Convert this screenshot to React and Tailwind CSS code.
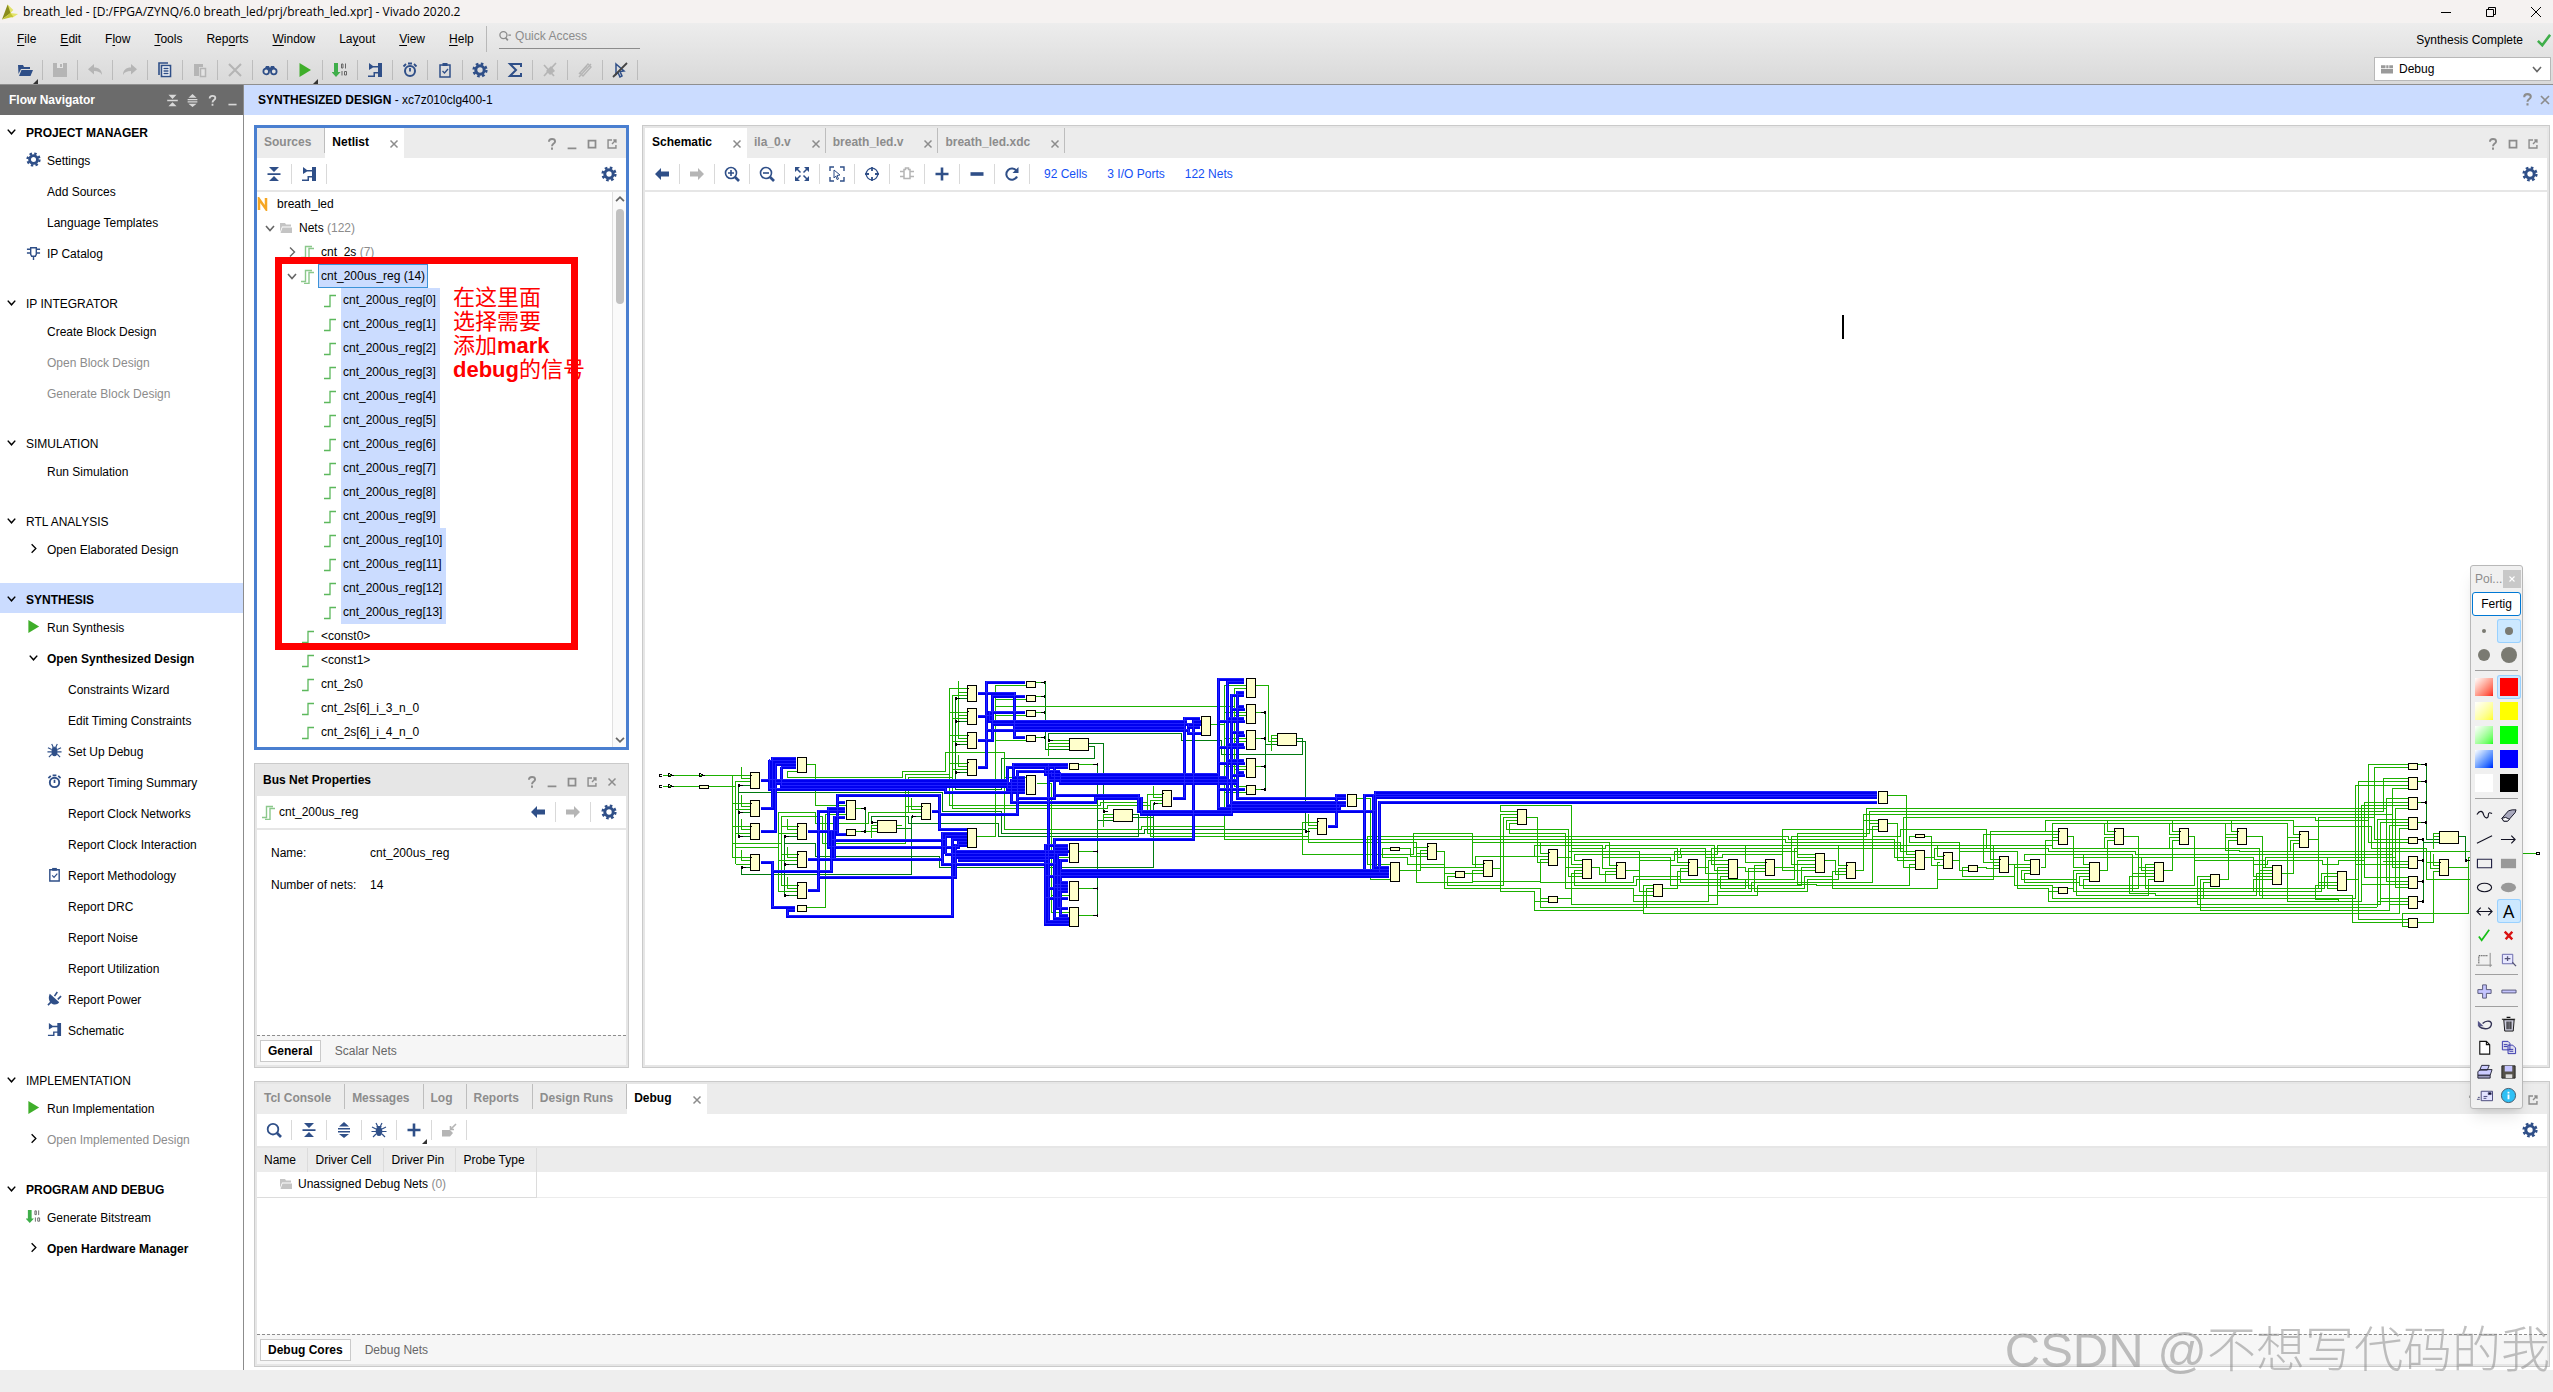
import { Fragment } from 'react';
import clsx from 'clsx';

// 16x16 toolbar glyphs, drawn with currentColor
const GLYPHS = {
  open: <><path d="M1 3h5l1 2h6v2H4L1.500 12z" fill="currentColor" /><path d="M4.500 8H16l-2.500 6H2z" fill="currentColor" /></>,
  save: <><path d="M1 1h14v14H1z" fill="currentColor" /><path d="M5 1h6v5H5z" fill="#e3e3e3" /><path d="M8 2h2v3H8z" fill="currentColor" /></>,
  undo: <path d="M7 2v3.500c5 0 8 2.500 8 7.500-1.500-3-4-4-8-4v3.500L1 7.200z" fill="currentColor" />,
  redo: <path d="M9 2v3.500c-5 0-8 2.500-8 7.500 1.500-3 4-4 8-4v3.500l6-5.300z" fill="currentColor" />,
  copy: <><path d="M2 13V1h9" fill="none" stroke="currentColor" strokeWidth="1.600" /><path d="M4.500 3.500h9v11h-9z" fill="#fff" stroke="currentColor" strokeWidth="1.600" /><path d="M6.500 6.500h5M6.500 9h5M6.500 11.500h5" stroke="currentColor" strokeWidth="1.300" /></>,
  paste: <><path d="M2 2h9v3H7v9H2z" fill="currentColor" /><path d="M8.500 6.500h5v8h-5z" fill="#e3e3e3" stroke="currentColor" strokeWidth="1.500" /></>,
  cross: <path d="M2 2l12 12M14 2L2 14" fill="none" stroke="currentColor" strokeWidth="2" />,
  binoculars: <><path d="M4 4h3l1 2 1-2h3l2.500 5H1.500z" fill="currentColor" /><circle cx="4.200" cy="9.500" r="2.800" fill="#e3e3e3" stroke="currentColor" strokeWidth="1.800" /><circle cx="11.800" cy="9.500" r="2.800" fill="#e3e3e3" stroke="currentColor" strokeWidth="1.800" /></>,
  play: <path d="M2.500 1v14L14 8z" fill="#3fae2a" />,
  bitstream: <><path d="M2 1h4v9h2.500L4 15-.5 10H2z" fill="#3fae4a" /><path d="M9.500 2h1.500v4H9.500zM13.500 1.500v5M10 9v4.500M12.500 9.500h2v3.500h-2z" fill="none" stroke="#666" /></>,
  schematic: <path d="M2 1l4 3h5V1h4v14h-4v-3.500H8V15H1v-1.500h5.500V10H11V5.500H6L2 8z" fill="currentColor" />,
  clock: <><circle cx="8" cy="9" r="5" fill="none" stroke="currentColor" strokeWidth="2" /><path d="M8 6v3.500M6 1.500h4M1.500 4.500l2.500-2.500M14.500 4.500L12 2" stroke="currentColor" strokeWidth="1.800" /></>,
  clipboard: <><path d="M3 3h10v12H3z" fill="none" stroke="currentColor" strokeWidth="1.500" /><path d="M5.500 1h5v3h-5z" fill="currentColor" /><path d="M5.500 9l2 2 3.500-4" fill="none" stroke="currentColor" strokeWidth="1.300" /></>,
  gear: <><circle cx="8" cy="8" r="4.200" fill="none" stroke="currentColor" strokeWidth="3" /><circle cx="8" cy="8" r="6.400" fill="none" stroke="currentColor" strokeWidth="2.400" strokeDasharray="2.600 2.430" /></>,
  sigma: <path d="M14 5V2H3l6 6-6 6h11v-3" fill="none" stroke="currentColor" strokeWidth="2" />,
  bugOff: <><path d="M4 9l5-5 4 5-5 4z" fill="currentColor" /><path d="M2 14L14 1M2 3l10 11" stroke="currentColor" strokeWidth="1.700" /></>,
  clipOff: <path d="M2 12L11 2l3 3-8 9-3-3 7-7M2 15L14 2" fill="none" stroke="currentColor" strokeWidth="1.400" />,
  selectOff: <><path d="M4 2l8 7-4 .5 2 4.500-2 1-2-4.500-2 2z" fill="none" stroke="currentColor" strokeWidth="1.500" /><path d="M1 15L15 1" stroke="#444" strokeWidth="1.800" /></>,
  collapse: <path d="M3 1h10L8 6zM1.500 7.200h13v1.800h-13zM3 15h10L8 10z" fill="currentColor" />,
  expand: <path d="M8 0l5 4.500H3zM2 6h12v1.600H2zM2 9h12v1.600H2zM3 12h10l-5 4z" fill="currentColor" />,
  chip: <><path d="M5 3h6v7l-1 2H6l-1-2z" fill="none" stroke="currentColor" strokeWidth="1.500" /><path d="M1 4.500h4M1 8.500h4M11 4.500h4M11 8.500h4M8 12v4" stroke="currentColor" strokeWidth="1.500" /></>,
  block: <path d="M5 3.500h1.500V2h3v1.500H11v9H5zM1 5.500h4M1 10.500h4M11 5.500h4M11 10.500h4" fill="none" stroke="currentColor" strokeWidth="1.500" />,
  bug: <><ellipse cx="8" cy="9.300" rx="3.300" ry="4.700" fill="currentColor" /><path d="M5.500 4.500h5M5 1l1.500 3M11 1L9.500 4M1 5l4 2M15 5l-4 2M.5 9.500H5M15.500 9.500H11M2 15l3-3M14 15l-3-3" fill="none" stroke="currentColor" strokeWidth="1.200" /></>,
  plug: <><path d="M3 3l10 9c-2 3-6 3-8.500 1S1 7 3 3z" fill="currentColor" /><path d="M8 5.500l3-4.500M11.500 9L15 5.500M5 11l-4 4" stroke="currentColor" strokeWidth="1.700" /></>,
  left: <path d="M7 2v3.500h8v5H7V14L1 8z" fill="currentColor" />,
  right: <path d="M9 2v3.500H1v5h8V14l6-6z" fill="currentColor" />,
  search: <><circle cx="7" cy="7.200" r="5.300" fill="none" stroke="currentColor" strokeWidth="1.800" /><path d="M11 11l4 4" stroke="currentColor" strokeWidth="2.600" /></>,
  zoomIn: <><circle cx="7" cy="7" r="5.500" fill="none" stroke="currentColor" strokeWidth="1.600" /><path d="M11 11l4 4" stroke="currentColor" strokeWidth="2.600" /><path d="M4 7h6M7 4v6" stroke="currentColor" strokeWidth="1.600" /></>,
  zoomOut: <><circle cx="7" cy="7" r="5.500" fill="none" stroke="currentColor" strokeWidth="1.600" /><path d="M11 11l4 4" stroke="currentColor" strokeWidth="2.600" /><path d="M4 7h6" stroke="currentColor" strokeWidth="1.600" /></>,
  fit: <><path d="M1 1h5L1 6zM15 1h-5l5 5zM1 15h5l-5-5zM15 15h-5l5-5z" fill="currentColor" /><path d="M2 2l4.500 4.500M14 2L9.500 6.500M2 14l4.500-4.500M14 14L9.500 9.500" stroke="currentColor" strokeWidth="1.500" /></>,
  selectArea: <><path d="M1 5V1h4M11 1h4v4M15 11v4h-4M5 15H1v-4" fill="none" stroke="currentColor" strokeWidth="1.400" /><path d="M5 4l6 5-3 .5 1.500 3.500L8 13.500 6.800 10 5 12z" fill="none" stroke="currentColor" /></>,
  target: <><circle cx="8" cy="8" r="5.800" fill="none" stroke="currentColor" strokeWidth="1.300" /><path d="M8 1v4M8 11v4M1 8h4M11 8h4" stroke="currentColor" strokeWidth="1.800" /></>,
  plus: <path d="M8 1.500v13M1.500 8h13" stroke="currentColor" strokeWidth="2.600" />,
  minus: <path d="M1.500 8h13" stroke="currentColor" strokeWidth="3.600" />,
  reload: <><path d="M13 10.500A5.600 5.600 0 1 1 12.500 5" fill="none" stroke="currentColor" strokeWidth="2" /><path d="M14.500 1v6h-6z" fill="currentColor" /></>,
  tag: <><path d="M1 8h8l3 3-3 3.500H1z" fill="currentColor" /><path d="M15 2l-5 5M9.500 4v3.500H13" fill="none" stroke="currentColor" strokeWidth="1.600" /></>,
  folder: <><path d="M2 3h5l1 1.500h5V6.500H4L2 12z" fill="#c4c4c4" /><path d="M4.500 7.500H14V13H2.500z" fill="#c4c4c4" /></>,
  bus: <path d="M1 13.500h4.500v-11H12M4 15.500h5v-11h5" fill="none" stroke="#8bc88b" strokeWidth="1.400" />,
  net: <path d="M2 14.500h6v-11h6" fill="none" stroke="#5cb85c" strokeWidth="1.300" />,
  help: <path d="M4.500 5.500c0-4.500 7-4 7-.500 0 2.500-3.500 2.500-3.500 5.500M8 12v2.500" fill="none" stroke="currentColor" strokeWidth="2.200" />,
  minimize: <path d="M3 13h10" stroke="currentColor" strokeWidth="2" />,
  maximize: <path d="M4 4h8v8H4z" fill="none" stroke="currentColor" strokeWidth="2" />,
  float: <path d="M8 3.500H3.500v9h9V9M8 8l4.500-4.500M9.500 3.500h3v3" fill="none" stroke="currentColor" strokeWidth="1.600" />,
  close: <path d="M4 4l8 8M12 4l-8 8" stroke="currentColor" strokeWidth="1.700" />,
  down: <path d="M4 6l4 4.500L12 6" fill="none" stroke="currentColor" strokeWidth="1.600" />,
  next: <path d="M6 3.500l4.500 4.500L6 12.500" fill="none" stroke="currentColor" strokeWidth="1.400" />,
  up: <path d="M3.500 10.500L8 6l4.500 4.500" fill="none" stroke="currentColor" strokeWidth="2" />,
  layout: <path d="M0 3h6v4H0zM7 3h3v4H7zM11 3h5v4h-5zM0 8h16v6H0z" fill="#9a9a9a" />,
  check: <path d="M1 9l5 5 9-12" fill="none" stroke="#3fae4a" strokeWidth="3" />,
};

function Icon({ name, size = 16, className }) {
  return (
    <svg viewBox="0 0 16 16" width={size} height={size} className={clsx('shrink-0', className)} aria-hidden="true">
      {GLYPHS[name]}
    </svg>
  );
}

function ToolButton({ icon, muted, menu, line = true }) {
  return (
    <button
      aria-label={icon}
      className={clsx(
        'relative flex h-5 w-[35px] items-center justify-center',
        line && 'border-r border-black/15',
        muted ? 'text-[#b5b5b5]' : 'text-[#2f4f88]',
      )}
    >
      <Icon name={icon} />
      {menu && (
        <svg viewBox="0 0 5 5" width="5" height="5" className="absolute right-1 -bottom-1">
          <path d="M5 0v5H0z" fill="#333" />
        </svg>
      )}
    </button>
  );
}

function WindowIcons({ icons }) {
  return (
    <div className="ml-auto flex items-center pt-[2px] pr-1 text-[#8c8c8c]">
      {icons.map((icon) => (
        <button key={icon} aria-label={icon} className="flex w-5 justify-center">
          <Icon name={icon} size={14} />
        </button>
      ))}
    </div>
  );
}

function Tabs({ tabs, icons }) {
  return (
    <div className="flex h-[30px] shrink-0 items-stretch bg-[#ececec]">
      {tabs.map(({ label, active, closable, line }) => (
        <div
          key={label}
          className={clsx('relative flex items-center pl-[7px]', active ? 'bg-white text-black' : 'text-[#8c8c8c]', closable ? 'pr-[3px]' : 'pr-[14px]')}
        >
          <button className="pb-[2px] font-bold">{label}</button>
          {closable && (
            <button aria-label={`Close ${label}`} className="pt-[2px] pl-[18px] text-[#8c8c8c]">
              <Icon name="close" size={14} />
            </button>
          )}
          {line && <span className="absolute top-0 right-0 h-[25px] w-px bg-[#bdbdbd]" />}
        </div>
      ))}
      <WindowIcons icons={icons} />
    </div>
  );
}

function Panel({ focused, className, children }) {
  return (
    <section
      className={clsx(
        'flex min-h-0 flex-col',
        focused ? 'border-[3px] border-[#4a7fd0] bg-white' : 'border border-[#cacaca] bg-[#e6e6e6] p-[2px]',
        className,
      )}
    >
      {children}
    </section>
  );
}

const toolbarRow = 'flex h-[34px] shrink-0 items-center border-b-2 border-[#e6e6e6] bg-white';

function BottomTabs({ active, other }) {
  return (
    <div className="flex h-[30px] shrink-0 items-center gap-[14px] border-t border-dashed border-[#8c8c8c] bg-[#f6f6f6] pl-[3px]">
      <button className="h-[22px] border border-[#cacaca] bg-white px-[7px] font-bold">{active}</button>
      <button className="text-[#666]">{other}</button>
    </div>
  );
}

const MENU = [
  ['', 'F', 'ile'], ['', 'E', 'dit'], ['F', 'l', 'ow'], ['', 'T', 'ools'], ['Rep', 'o', 'rts'],
  ['', 'W', 'indow'], ['La', 'y', 'out'], ['', 'V', 'iew'], ['', 'H', 'elp'],
];

const TOOLS = [
  { icon: 'open', menu: true }, { icon: 'save', muted: true }, { icon: 'undo', muted: true }, { icon: 'redo', muted: true },
  { icon: 'copy' }, { icon: 'paste', muted: true }, { icon: 'cross', muted: true }, { icon: 'binoculars' },
  { icon: 'play', menu: true }, { icon: 'bitstream' }, { icon: 'schematic' }, { icon: 'clock' }, { icon: 'clipboard' },
  { icon: 'gear' }, { icon: 'sigma' }, { icon: 'bugOff', muted: true }, { icon: 'clipOff', muted: true }, { icon: 'selectOff' },
];

function Header() {
  return (
    <header className="shrink-0">
      <div className="flex h-[23px] items-center bg-[#f5f2f1] pl-[2px]">
        <svg viewBox="0 0 18 18" width="17" height="18">
          <path d="M6 1l6 6-3 3 8 1-6 4-5-3z" fill="#e3e36a" />
          <path d="M6 1l3 9-9 7 3-8z" fill="#8a8c1c" />
          <path d="M0 17l9-7 3 4z" fill="#c3c532" />
        </svg>
        <h1 className="ml-1 font-['Open_Sans',sans-serif] text-[12px]/[18px]">breath_led - [D:/FPGA/ZYNQ/6.0 breath_led/prj/breath_led.xpr] - Vivado 2020.2</h1>
        <div className="ml-auto flex items-center gap-[35px] pr-3">
          <svg viewBox="0 0 10 10" width="10" height="10"><path d="M0 5.500h10" stroke="#000" /></svg>
          <svg viewBox="0 0 10 10" width="10" height="10" fill="none" stroke="#000"><path d="M.5 2.500h7v7h-7zM2.500 2.500v-2h7v7h-2" /></svg>
          <svg viewBox="0 0 10 10" width="10" height="10" stroke="#000"><path d="M0 0l10 10M10 0L0 10" /></svg>
        </div>
      </div>
      <div className="flex h-[62px] justify-between border-b border-[#8f8f8f] bg-linear-to-b from-[#ededed] to-[#d9d9d9]">
        <div>
          <div className="flex h-[31px] items-center pl-[5px]">
            {MENU.map(([before, key, after]) => (
              <button key={before + key + after} className="px-3">
                {before}<span className="underline underline-offset-2">{key}</span>{after}
              </button>
            ))}
            <label className="flex h-[26px] items-center border-l border-[#b8b8b8] pl-3">
              <span className="flex w-[141px] items-center gap-1 border-b border-[#8c8c8c] pb-1 text-[#8c8c8c]">
                <svg viewBox="0 0 14 14" width="14" height="14" fill="none" stroke="currentColor">
                  <circle cx="5" cy="6" r="4" strokeWidth="1.500" /><path d="M7.500 9l2.500 3" strokeWidth="2" /><path d="M10.500 6h3" strokeWidth="1.500" />
                </svg>
                <input className="w-full outline-none placeholder:text-[#8c8c8c]" placeholder="Quick Access" />
              </span>
            </label>
          </div>
          <div className="flex h-[31px] items-center pl-2">
            {TOOLS.map((tool) => <ToolButton key={tool.icon} {...tool} />)}
          </div>
        </div>
        <div className="flex flex-col items-end pr-[2px]">
          <div className="flex h-[34px] items-center gap-[14px]">
            <span>Synthesis Complete</span>
            <Icon name="check" size={14} />
          </div>
          <label className="relative flex h-[24px] w-[177px] items-center border border-[#b8b8b8] bg-white pl-[6px]">
            <Icon name="layout" size={12} />
            <select aria-label="Layout" className="h-full w-full appearance-none pl-[6px] outline-none" defaultValue="Debug">
              <option>Debug</option>
            </select>
            <Icon name="down" className="pointer-events-none absolute right-[5px] text-[#666]" />
          </label>
        </div>
      </div>
    </header>
  );
}

const FLOW = [
  { title: 'PROJECT MANAGER', bold: true, items: [{ label: 'Settings', icon: 'gear' }, { label: 'Add Sources' }, { label: 'Language Templates' }, { label: 'IP Catalog', icon: 'chip' }] },
  { title: 'IP INTEGRATOR', items: [{ label: 'Create Block Design' }, { label: 'Open Block Design', off: true }, { label: 'Generate Block Design', off: true }] },
  { title: 'SIMULATION', items: [{ label: 'Run Simulation' }] },
  { title: 'RTL ANALYSIS', items: [{ label: 'Open Elaborated Design', icon: 'next' }] },
  {
    title: 'SYNTHESIS', bold: true, current: true,
    items: [
      { label: 'Run Synthesis', icon: 'play' },
      { label: 'Open Synthesized Design', icon: 'down', bold: true },
      { label: 'Constraints Wizard', deep: true },
      { label: 'Edit Timing Constraints', deep: true },
      { label: 'Set Up Debug', icon: 'bug', deep: true },
      { label: 'Report Timing Summary', icon: 'clock', deep: true },
      { label: 'Report Clock Networks', deep: true },
      { label: 'Report Clock Interaction', deep: true },
      { label: 'Report Methodology', icon: 'clipboard', deep: true },
      { label: 'Report DRC', deep: true },
      { label: 'Report Noise', deep: true },
      { label: 'Report Utilization', deep: true },
      { label: 'Report Power', icon: 'plug', deep: true },
      { label: 'Schematic', icon: 'schematic', deep: true },
    ],
  },
  { title: 'IMPLEMENTATION', items: [{ label: 'Run Implementation', icon: 'play' }, { label: 'Open Implemented Design', icon: 'next', off: true }] },
  { title: 'PROGRAM AND DEBUG', bold: true, items: [{ label: 'Generate Bitstream', icon: 'bitstream' }, { label: 'Open Hardware Manager', icon: 'next', bold: true }] },
];

function FlowNavigator() {
  return (
    <nav className="flex w-[244px] shrink-0 flex-col border-r border-[#8c8c8c] bg-white">
      <div className="flex h-[30px] items-center bg-[#6b6b6b] pl-[9px] font-bold text-white">
        Flow Navigator
        <div className="ml-auto flex pr-px text-[#d8d8d8]">
          {['collapse', 'expand', 'help', 'minimize'].map((icon) => (
            <button key={icon} aria-label={icon} className="flex w-5 justify-center"><Icon name={icon} size={13} /></button>
          ))}
        </div>
      </div>
      <div className="flex flex-col gap-[17px] pt-px">
        {FLOW.map((group) => (
          <div key={group.title}>
            <button className={clsx('flex h-[30px] w-full items-center gap-[7px] pt-[3px] pl-1', group.bold && 'font-bold', group.current && 'bg-[#cbdcff]')}>
              <Icon name="down" size={15} className="-mt-[3px]" />
              {group.title}
            </button>
            {group.items.map((item) => (
              <button
                key={item.label}
                className={clsx('flex h-[31px] w-full items-center gap-[6px] pb-[2px]', item.deep ? 'pl-[46px]' : 'pl-[25px]', item.bold && 'font-bold', item.off && 'text-[#8c8c8c]')}
              >
                <span className={clsx('flex w-4 justify-center pb-[2px]', item.icon === 'next' || item.icon === 'down' ? 'text-black' : 'text-[#2f4f88]')}>
                  {item.icon && <Icon name={item.icon} size={15} />}
                </span>
                {item.label}
              </button>
            ))}
          </div>
        ))}
      </div>
    </nav>
  );
}

const REG_BITS = Array.from({ length: 14 }, (_, i) => `cnt_200us_reg[${i}]`);
const PLAIN_NETS = ['<const0>', '<const1>', 'cnt_2s0', 'cnt_2s[6]_i_3_n_0', 'cnt_2s[6]_i_4_n_0'];

function NetTree() {
  return (
    <div className="relative flex min-h-0 flex-1">
      <ul className="flex-1 leading-6">
        <li className="flex items-center gap-2">
          <svg viewBox="0 0 12 14" width="12" height="14"><path d="M2 13V2l7 10V1" fill="none" stroke="#f5a623" strokeWidth="2.500" /></svg>
          breath_led
        </li>
        <li className="flex items-center pl-[5px]">
          <Icon name="down" className="text-[#666]" /><Icon name="folder" className="mr-[5px]" />
          <span>Nets <span className="text-[#8c8c8c]">(122)</span></span>
        </li>
        <li className="flex items-center pl-[27px]">
          <Icon name="next" className="text-[#666]" /><Icon name="bus" className="mr-[5px]" />
          <span>cnt_2s <span className="text-[#8c8c8c]">(7)</span></span>
        </li>
        <li className="flex items-center pl-[27px]">
          <Icon name="down" className="text-[#666]" /><Icon name="bus" className="mr-[2px]" />
          <span className="h-6 border border-[#3c93d8] bg-[#cbdcff] px-[2px] leading-[22px]">cnt_200us_reg (14)</span>
        </li>
        {REG_BITS.map((net) => (
          <li key={net} className="flex items-center gap-[3px] pl-[65px]">
            <Icon name="net" /><span className="bg-[#cbdcff] pr-1 pl-[2px]">{net}</span>
          </li>
        ))}
        {PLAIN_NETS.map((net) => (
          <li key={net} className="flex items-center gap-[5px] pl-[43px]"><Icon name="net" />{net}</li>
        ))}
      </ul>
      <div className="flex w-[14px] flex-col items-center justify-between border-l border-[#e0e0e0] bg-[#fafafa] text-[#666]">
        <Icon name="up" size={14} />
        <div className="mt-[3px] mb-auto h-[95px] w-2 rounded-full bg-[#c1c1c1]" />
        <Icon name="up" size={14} className="rotate-180" />
      </div>
      {/* hand-drawn note over the tree */}
      <div className="absolute top-[65px] left-[18px] h-[393px] w-[303px] border-[7px] border-[#ff0000]" />
      <p className="absolute top-[94px] left-[196px] font-['Liberation_Sans','Noto_Sans_CJK_SC',sans-serif] text-[22px]/[24px] whitespace-nowrap text-[#ff0000]">
        在这里面<br />选择需要<br />添加<b>mark</b><br /><b>debug</b>的信号
      </p>
    </div>
  );
}

// Each sheet carries its own drawing grid; boxes are [x, y, w, h].
const SHEETS = [
  {
    at: 'translate(640 660) scale(.33333)',
    net: 'M70 346H330M70 379H287M278 346V592H330M287 613V364H330M287 613H330M304 321V355H330M278 430H330M304 405V439H330M287 448H330M278 499H330M304 478V508H330M287 520H330M304 570V601H330M278 550H424M287 562H415M415 694V457H526V490H685V457H843M424 676V469H547V550H796V343H928M424 499H471M442 478V508H471M415 520H471M424 583H471M442 561V592H471M415 601H471M424 676H471M442 651V685H471M415 694H471M501 313H526V436H618M471 334H442V352H787V334H916V277H1093V508H1200M805 457V352H937M501 742H556V463H618M796 439H843M814 414V448H843M928 436V85H981M937 445V106H981M955 63V235H981M955 97H981M928 436H1200M937 445H1200M928 157H981M955 166H981M937 175H981M928 226H981M937 244H981M928 310H981M955 285V319H981M937 328H981M1158 76H1066V529H1012M1066 118H1158M1066 139H1200M1066 166H1158M1066 241H1158M1190 370H1234M1093 352H1158M694 534V496H712M694 505H712M679 514H712M770 496H785M648 445H672M648 514H672M1188 67H1212M1188 109H1212M1188 157H1212M1188 232H1212',
    dark: 'M330 376H296V529H330M296 457H330M296 397H907V454H1084V520H1200M330 622H304V643H814V469H843M471 529H433V706H471M433 613H471M433 550H526V589H898V622H1200M676 445V514M712 487H694V469H805V490H1075V529H1200M770 505H814M981 115H946V388H1084V295H1200M946 184H981M946 253H981M946 337H981',
    bus: 'M363 361H1102V322H1216M363 445H399V295H468M363 514H406V313H468M389 301V388H916V397H1155M389 304H468M424 322V379H1155M424 322H468M406 370H1155M363 607H398V742H466M398 634H575V514M504 514H592M504 598H907V520H980M504 691H536V454H616M466 751H442V769H938V538H980M536 652H947V556H980M616 445H566V562H955V547H980M575 541H916M916 583V529H980M916 583H1200M616 472H584V598M616 427H592V406H898V508H980M592 406V523H618M876 454H898M898 463H1134V334H1200M907 598V613H1216M947 574H1200M938 592H1200M955 601H1200M1014 100H1124V232H1155M1014 169H1057V109H1155M1014 241H1057V169M1014 322H1040V67H1155M1155 157H1048V185H1200M1057 193H1200M1124 203H1200M1040 211H1200M1102 361V388H1155M1155 361H1114V427H1200M1134 415H1200M1155 352H1120V313H1200',
    cells: [[331, 337, 27, 48], [331, 421, 27, 48], [331, 490, 27, 48], [331, 583, 27, 48], [472, 292, 27, 45], [472, 490, 27, 48], [472, 574, 27, 48], [472, 667, 27, 48], [472, 736, 27, 18], [619, 421, 27, 57], [619, 508, 27, 18], [712, 481, 57, 36], [844, 430, 27, 48], [982, 76, 27, 48], [982, 145, 27, 48], [982, 217, 27, 48], [982, 298, 27, 48], [982, 505, 27, 57], [1159, 64, 27, 18], [1159, 106, 27, 18], [1159, 151, 27, 18], [1159, 226, 27, 18], [1159, 346, 27, 57], [178, 376, 27, 9]],
    left: [[297, 376], [297, 457], [297, 529], [306, 622], [435, 529], [435, 613], [435, 706], [948, 115], [948, 184], [948, 253], [948, 337], [696, 487], [817, 469]],
    right: [[675, 445], [675, 514], [1215, 67], [1215, 109], [1215, 157], [1215, 232]],
  },
  {
    at: 'translate(1040 660) scale(.33333)',
    net: 'M0 139H583M618 85H583V379H618M618 76H553V538H1080M553 157H618M553 235H618M553 319H618M583 166H618M583 244H618M583 328H618M553 397H618M513 193H553M648 76H685V244H712M694 272V226H712M694 235H712M25 288V250H88M25 259H88M25 241H88M118 313H160M118 574H160M118 685H160M118 766H160M648 157H665M648 235H665M648 319H665M648 388H665M0 436H181V427H322M0 445H202V436H331M367 403H322V520H787M367 421H331V529H805M340 378V412H367M343 430H367M190 500V463H220M190 472H220M0 508H304V499H553M0 370H34V757H88M34 592H88M34 706H88M832 487H787V583H1080M805 462V496H832M832 505H805V547H1080M1080 529H982V613H1051M951 415H991V658H1051M1051 565H1027V592H1080',
    dark: 'M16 67V268H88M0 295H163V259H148M88 241H25V220H424V241H544V283H787V235H771M771 244H796V514M676 157V388M676 253H712M172 313V766M172 481H220M148 250H190V454M280 463H295V529H0M280 472H340M340 430V622H0M0 520H313V508H796',
    bus: 'M0 185H440M0 193H445M0 203H434M0 211H445V221H484M400 415H434V175H480M445 193H484M484 184H460V538H43V775H88M612 58H535V445H900V436M612 67H562V436H918M612 106H575V463H304V415H166V427H0M612 97H592V415H918M592 140H612M575 148H616M562 175H612M535 184H616M575 217H612M592 227H616M562 253H612M535 262H616M562 301H612M535 310H616M592 338H612M575 346H616M535 388H616M0 313H85M0 322H85M25 313V784H88M43 322V415H0M16 322V343H535M34 340V352H562M25 361H592M61 340V370H592M0 334H61M43 406H295V454H1006V398H1080M575 427H918M864 499H889V406H918M973 631V406H1080M1000 406V631M1006 400V622H1048M1080 427H1018V640M1006 413H1080M61 631H1048M61 640H1048M16 649H1048M0 574H88M0 583H84M0 592H43M0 601H25M0 613H48M88 793H16V556H84M43 565H84M84 601H61V766H84M52 583V745H84M61 667H84M43 676H84M25 685H84M52 694H84M16 715H84M480 202H445V193',
    cells: [[88, 235, 57, 36], [88, 310, 27, 18], [88, 550, 27, 57], [88, 664, 27, 57], [88, 742, 27, 57], [220, 448, 57, 36], [367, 391, 27, 48], [484, 169, 27, 57], [619, 55, 27, 57], [619, 133, 27, 57], [619, 211, 27, 57], [619, 295, 27, 57], [619, 376, 27, 27], [712, 220, 57, 36], [832, 475, 27, 48], [922, 403, 27, 36], [1051, 562, 27, 9], [1051, 607, 27, 57]],
    left: [[27, 241], [192, 454], [343, 430], [798, 514]],
    right: [[172, 313], [172, 574], [172, 685], [172, 766], [675, 157], [675, 235], [675, 319], [675, 388]],
  },
  {
    at: 'translate(1400 740) scale(.35714 .33333)',
    net: 'M0 289H1087V298H1384V352H1443M0 298H1079V307H1401V334H1443M0 307H46V427H203V391H233M0 343H37V280H203V373H233M37 322H77M0 352H21V373H124M77 331H57V391H0M57 382H233M46 340H77M0 325H29V349H77M105 334H124V445H393V502H1512M124 400H155M155 409H133V436H289V232H329M182 400H233M203 307H586V376H606M211 382V349H415M203 424H393V358H415M393 427H653V409H785V385H807M260 385H281V223H329M281 385V454H376V511H681V520H1512M329 214H281V196H480V373H511M329 241H298V268H472V409H511M329 250H306V280H463V445H653V484H863V361H919M357 232H385V367H415M376 349V316H567V385H606M393 307V340H415M443 352H480M480 325H575V316H880V391H919M472 334H670V454H709M463 382H511M511 361H488V343H888V316H1512M511 400H480V493H888V382H919M511 391H488V436H662V418H1104V325H1409M538 382H558V403H606M575 427V394H606M586 325H777V367H807M567 352H757V436H993M757 376H807M634 391H670M670 361H768V334H872V373H919M415 475H393M415 484H376M443 475H480M736 445H777V394H807M709 436H681V511M709 445H690V502M709 466H653M785 409V427H975M777 352H788V343M785 343V325H855V400H919M835 382H863M855 352H903V343H1071M872 334V325H1096V373H1163M880 334H1113V352H1163M919 409H897V445H967V418M946 382H967V394H1023M967 316V367H1023M1023 385H975V445H1132V409H1211M1023 376H993V454H1141V418H1228V391M888 454H984V427H1323V259H1339M1051 382H1104M1163 391H1071V268H1298M1163 343H1113V280H1315V214H1512M1096 325V289H1307V205H1512M1163 361H1113V433H1166V436H1427V373H1443M1163 382H1124V436H1000V466H863M1190 361H1219V403H1250M1250 394H1211V445H1505V367H1512M1250 385H1228V409M1228 316V376H1250M1277 391H1298V223H1512M1298 241H1339M1315 214V250H1339M1307 205V268H1339M1366 166H1418V343H1443M1366 250H1393V361H1443M1323 289H1401V268H1512M1443 382H1409V232H1512M1443 289H1427V307H1512M1470 289H1488V376H1520M1470 352H1496M1520 358H1496V325H1512M1505 316V349H1520M1505 418H1512',
    dark: '',
    bus: 'M0 158H1337M0 166H1337M0 174H1337M0 187H1337',
    cells: [[77, 310, 26, 48], [155, 394, 26, 18], [233, 361, 26, 48], [329, 208, 26, 45], [415, 328, 26, 48], [415, 469, 26, 18], [511, 358, 26, 57], [606, 367, 26, 48], [709, 433, 26, 36], [807, 358, 26, 48], [919, 358, 26, 57], [1023, 358, 26, 48], [1163, 340, 26, 57], [1250, 367, 26, 48], [1339, 154, 26, 36], [1339, 238, 26, 36], [1443, 283, 26, 9], [1443, 331, 26, 57]],
    left: [],
    right: [],
  },
  {
    at: 'translate(1940 740) scale(.39093 .33333)',
    net: 'M0 205H1142V424H1198M0 214H1134V115H1198M0 223H1157V145H1198M1157 223V382H1198M0 232H960V241H1096V73H1198M968 445V232H1112V82H1198M905 241V259H1103V325H1245V418H1358M0 268H119V325M0 325H277V334H500V343H1157M0 307H50V391H72M0 316H288V250H889V484H1078V196H1198M137 316V418H0M303 274H129V358H152M303 283H111V367H152M270 274V241H905V283H919M288 292V325H817V466H1055V547H1198M288 292H303M258 382H270V301H303M328 289H341V382H383M429 241V274H446M421 250V283H446M421 325V292H446M446 301H429V391H407M471 289H508V445H366V418H383M595 241V274H612M587 250V283H612M587 325V292H612M612 301H595V391H573M638 289H651V436H533M746 241V274H761M730 250V331H766V334H1358M730 283H761M730 292H761M761 301H738V418H717M786 289H825V475M889 292H919M919 301H897V334M919 310H905V400H875M945 298H968M50 334H198V445H277V484H658V409H692M341 352H802V409H850M802 373H838V361H978V373H1019V361H1086V187H1198M832 382V352H1165V205H1198M651 361H835M231 361H217V343H492V454H809V427M177 373H190V436H288V475H1063V136H1198M34 361H50M72 382H57V409H190M97 382H119V385H152M152 376H137M190 373H231M190 382H231M231 391H208V418H349M231 400H217V427H357M383 400H349V466H533V418H548M383 409H357V436H651M383 391H341V454H492M383 373H366V343M328 445H341M303 442H288M303 454H277M516 352V391H548M548 373H525V445H802M508 382H548M492 400H548M548 409H485V460H552V466H809V400H850M658 484V493H1126V247H1198M692 418H666V511H1150V256H1198M692 427H675V475M825 382H850M817 391H850M850 418H802V454H975V400H1017M802 445H984V409H1017M1017 427H968M1017 436H960V478H1019V484M1017 445H991V352M1041 418H1070V538H1198M1070 418V124H1198M1086 361V412H1198M1078 433H1198M1063 373H1198M1119 502V238H1198M0 502H1119M1176 520V265H1198M0 520H1176M1142 205V175H1198M1119 484H1198M1126 475H1198M1150 493H1198M1165 352V442H1198M1134 364H1198M1096 241V307H1198M1112 232V298H1198M1358 352H1353V520H1183V559H1198M1222 547H1262V394H1277M1222 73H1235M1222 124H1235M1222 187H1235M1222 247H1235M1262 326V280H1277M1262 289H1277M1262 343V376H1277M1245 367H1277M1255 334V385H1277M1303 382H1353M1491 340H1526M0 349H8M0 376H8',
    dark: 'M1244 73V298H1277M1236 298V484M1236 307H1277M1328 289H1344V361',
    bus: '',
    cells: [[9, 337, 24, 48], [73, 376, 24, 18], [152, 349, 24, 48], [231, 358, 24, 45], [303, 265, 24, 48], [303, 442, 24, 18], [383, 367, 24, 57], [446, 265, 24, 48], [548, 367, 24, 57], [612, 265, 24, 48], [692, 403, 24, 36], [761, 265, 24, 48], [850, 376, 24, 57], [919, 274, 24, 48], [1017, 394, 24, 57], [1198, 70, 24, 18], [1198, 112, 24, 36], [1198, 172, 24, 36], [1198, 232, 24, 36], [1198, 292, 24, 18], [1198, 349, 24, 36], [1198, 409, 24, 36], [1198, 469, 24, 36], [1198, 535, 24, 27], [1277, 274, 50, 36], [1277, 358, 24, 48]],
    left: [[1346, 361]],
    right: [[1243, 73], [1243, 124], [1243, 187], [1243, 247], [1235, 298], [1235, 361], [1235, 424], [1235, 484]],
  },
];

function SchematicCanvas() {
  return (
    <svg viewBox="645 192 1902 873" className="block min-h-0 w-full flex-1 bg-white" fill="none" shapeRendering="crispEdges">
      {SHEETS.map((sheet) => (
        <g key={sheet.at} transform={sheet.at}>
          <path d={sheet.dark} stroke="#007a10" vectorEffect="non-scaling-stroke" />
          <path d={sheet.net} stroke="#1bb000" vectorEffect="non-scaling-stroke" />
          <path d={sheet.bus} stroke="#0000f0" strokeWidth="3" vectorEffect="non-scaling-stroke" />
          <g transform="translate(0 -3)">
            <path d={sheet.bus} stroke="#2020ff" vectorEffect="non-scaling-stroke" />
          </g>
          {sheet.cells.map(([x, y, w, h]) => (
            <Fragment key={`${x}-${y}`}>
              <rect x={x} y={y} width={w} height={h} fill="#ffffcc" stroke="#000" vectorEffect="non-scaling-stroke" />
              {h === 48 && <path d={`M${x} ${y + 9}h4`} stroke="#000" vectorEffect="non-scaling-stroke" />}
            </Fragment>
          ))}
          {sheet.left.map(([x, y]) => <path key={`${x}-${y}`} d={`M${x - 2} ${y - 4}h5v3h8v3h-8v3h-5z`} fill="#000" />)}
          {sheet.right.map(([x, y]) => <path key={`${x}-${y}`} d={`M${x + 3} ${y - 4}h-5v3h-10v3h10v3h5z`} fill="#000" />)}
        </g>
      ))}
      <path d="M662 774h-3v2h3M662 785h-3v2h3M668 773v4l5-1.500zM668 784v4l5-1.500zM699 773v4l5-1.500zM2536 852h3v2h-3z" stroke="#000" />
      <path d="M1843 315v24" stroke="#000" strokeWidth="2" />
    </svg>
  );
}

function DebugTable() {
  const cell = 'border-r border-[#dcdcdc] px-[7px] text-left font-normal';
  return (
    <div className="flex-1 bg-white">
      <div className="bg-[#ececec]">
        <table className="border-collapse">
          <thead className="h-6">
            <tr>
              <th className={clsx(cell, 'w-[51px]')}>Name</th>
              <th className={clsx(cell, 'w-[76px]')}>Driver Cell</th>
              <th className={clsx(cell, 'w-[72px]')}>Driver Pin</th>
              <th className={clsx(cell, 'w-[81px]')}>Probe Type</th>
            </tr>
          </thead>
          <tbody className="h-[25px] bg-white">
            <tr>
              <td colSpan={4} className="border-r border-b border-[#dcdcdc] pl-[21px]">
                <div className="flex items-center gap-1">
                  <Icon name="folder" />
                  <span>Unassigned Debug Nets <span className="text-[#8c8c8c]">(0)</span></span>
                </div>
              </td>
              <td className="w-[2011px] bg-white" />
            </tr>
          </tbody>
        </table>
      </div>
    </div>
  );
}

const PALETTE = [
  ['bg-linear-to-br from-white to-[#ff0000]', 'bg-[#ff0000]'],
  ['bg-linear-to-br from-white to-[#ffff00]', 'bg-[#ffff00]'],
  ['bg-linear-to-br from-white to-[#00ff00]', 'bg-[#00ff00]'],
  ['bg-linear-to-br from-white to-[#0000ff]', 'bg-[#0000ff]'],
  ['bg-white', 'bg-black'],
];

// 18x18 drawing tools, in reading order
const PEN_TOOLS = [
  ['curve', <path d="M1 8c3-5 6-4 7 0s5 5 5 1 2-3 4-2" fill="none" stroke="#112" strokeWidth="1.200" />],
  ['marker', <><path d="M2 12l7-8 4-1h4l-1 3-8 9H4z" fill="#a9a9bd" stroke="#112" /><path d="M2 12l4-1 4 2-2 2H4z" fill="#fff" stroke="#112" /></>],
  ['line', <path d="M1 13L17 5" stroke="#112" strokeWidth="1.200" />],
  ['arrow', <path d="M1 9h15M12 5l4 4-4 4" fill="none" stroke="#112" strokeWidth="1.200" />],
  ['box', <path d="M1.500 4.500h15v9h-15z" fill="none" stroke="#224" strokeWidth="1.200" />],
  ['filled box', <path d="M1 4h16v10H1z" fill="#999" />],
  ['ellipse', <ellipse cx="9" cy="9" rx="7.500" ry="4.500" fill="none" stroke="#112" strokeWidth="1.200" />],
  ['filled ellipse', <ellipse cx="9" cy="9" rx="8" ry="5" fill="#999" />],
  ['double arrow', <path d="M1 9h16M5 5L1 9l4 4M13 5l4 4-4 4" fill="none" stroke="#112" strokeWidth="1.200" />],
  ['accept', <path d="M3 10l3 4 8-11" fill="none" stroke="#16c016" strokeWidth="1.800" />],
  ['discard', <path d="M5 5l8 8M13 5l-7 8" stroke="#d91111" strokeWidth="2.600" />],
  ['crop', <><path d="M0 15h17M15 2v15" stroke="#888" /><path d="M3 13V5h10" fill="none" stroke="#000" strokeDasharray="1 1" /></>],
  ['magnify', <><path d="M2.500 3.500h11v10h-11z" fill="#e8e8ff" stroke="#66a" /><path d="M5 8h6M8 5.500v5M13 12l4 4" stroke="#557" strokeWidth="1.400" /></>],
];

const PEN_ACTIONS = [
  ['undo', <><path d="M3 12c3 3 11 4 13-1s-5-6-9-2" fill="none" stroke="#335" strokeWidth="1.500" /><path d="M2 6v6h6z" fill="#558" /></>],
  ['trash', <><path d="M4 5h11l-1 12H5z" fill="#ccd" stroke="#111" /><path d="M2 4.500h14M7 2.500h4M7.500 7v8M9.500 7v8M11.500 7v8" stroke="#111" strokeWidth="1.200" /></>],
  ['new', <path d="M4 2.500h7l3.500 3.500v10H4zM11 2.500V6h3.500" fill="#fff" stroke="#111" strokeWidth="1.200" />],
  ['copy pages', <path d="M2.500 2.500h6l2 2v7h-8zM8.500 6.500h5l3 3v6h-8zM4 6h4M4 8h4M10 11h4M10 13h4" fill="#dde" stroke="#33a" />],
  ['print', <><path d="M6 2.500h8l-2 5H4zM2 9l3-2h12l-2 6H2z" fill="#ccf" stroke="#223" /><path d="M2 13h13v3H2z" fill="#99b" stroke="#223" /></>],
  ['save file', <><path d="M2 3h14v13H2z" fill="#55524a" stroke="#222" /><path d="M5 3h8v6H5z" fill="#c5c5ff" /><path d="M6 12h7v4H6z" fill="#ddd" /></>],
  ['mail', <><path d="M5.500 4.500h12v10h-12z" fill="#e4e4ff" stroke="#447" /><path d="M13 6h3v2h-3zM8 10h4M8 12h3M1 13h3M2 11h2" stroke="#447" /></>],
  ['info', <><circle cx="9" cy="9" r="7.500" fill="#2fc0f5" stroke="#456" /><path d="M9 8v5M9 5v1.800" stroke="#fff" strokeWidth="2" /></>],
];

const penButton = 'flex h-6 items-center justify-center rounded-[3px]';
const penPicked = 'bg-[#cce8ff] ring-1 ring-[#99d1ff] ring-inset';

function PenButtons({ items }) {
  return items.map(([name, shape]) => (
    <button key={name} aria-label={name} className={penButton}>
      <svg viewBox="0 0 18 18" width="17" height="17">{shape}</svg>
    </button>
  ));
}

function PenToolbox() {
  const grid = 'grid grid-cols-2';
  const rule = 'mx-[3px] mt-[3px] mb-1 h-px bg-[#a0a0a0]';
  return (
    <aside className="absolute top-[565px] right-[30px] w-[53px] rounded-[3px] border border-[#b8b8b8] bg-[#f0f0f0] px-px pb-px shadow-lg">
      <div className="flex h-[26px] items-center justify-between pl-[3px] text-[#8c8c8c]">
        Poi...
        <button aria-label="Close toolbox" className="flex h-[18px] w-[18px] items-center justify-center bg-[#c8c8c8] text-white"><Icon name="close" size={10} /></button>
      </div>
      <button className="h-6 w-full rounded-[3px] border border-[#0078d4] bg-white">Fertig</button>
      <div className={clsx(grid, 'pt-[3px]')}>
        {[4, 8, 12, 16].map((size) => (
          <button key={size} aria-label={`Pen ${size}`} className={clsx(penButton, size === 8 && penPicked)}>
            <svg width={size} height={size}><circle cx={size / 2} cy={size / 2} r={size / 2} fill="#7a7a72" /></svg>
          </button>
        ))}
      </div>
      <div className={rule} />
      <div className={grid}>
        {PALETTE.flat().map((swatch) => (
          <button key={swatch} aria-label={swatch} className={clsx(penButton, swatch === 'bg-[#ff0000]' && penPicked)}>
            <span className={clsx('h-[18px] w-[18px]', swatch)} />
          </button>
        ))}
      </div>
      <div className={rule} />
      <div className={grid}>
        <PenButtons items={PEN_TOOLS.slice(0, 9)} />
        <button aria-label="Text" className={clsx(penButton, penPicked, "font-['Open_Sans',sans-serif] text-[18px]/[24px]")}>A</button>
        <PenButtons items={PEN_TOOLS.slice(9)} />
      </div>
      <div className={rule} />
      <div className={grid}>
        <PenButtons
          items={[
            ['add', <path d="M7 2h4v5h5v4h-5v5H7v-5H2V7h5z" fill="#c5c5ff" stroke="#557" />],
            ['remove', <path d="M2 7.500h15v3H2z" fill="#c5c5ff" stroke="#557" />],
          ]}
        />
      </div>
      <div className={rule} />
      <div className={grid}><PenButtons items={PEN_ACTIONS} /></div>
    </aside>
  );
}

const SCHEMATIC_TOOLS = [
  ['left'], ['right', true], ['zoomIn'], ['zoomOut'], ['fit'], ['selectArea'], ['target'], ['block', true], ['plus'], ['minus'], ['reload'],
];

export default function App() {
  return (
    <div className="relative flex h-screen min-h-[1100px] flex-col overflow-hidden bg-[#eee] font-['Liberation_Sans',Arial,sans-serif] text-[12px]/[16px] text-black">
      <Header />
      <div className="flex min-h-0 flex-1">
        <FlowNavigator />
        <main className="flex min-w-0 flex-1 flex-col bg-white">
          <div className="flex h-[30px] shrink-0 items-center bg-[#cbdcff] pl-[14px]">
            <span><b>SYNTHESIZED DESIGN</b> - xc7z010clg400-1</span>
            <div className="ml-auto flex text-[#8c8c8c]">
              <button aria-label="Help" className="flex w-5 justify-center"><Icon name="help" size={15} /></button>
              <button aria-label="Close design" className="flex w-4 justify-center"><Icon name="close" /></button>
            </div>
          </div>
          <div className="flex min-h-0 flex-1 flex-col gap-[13px] pt-[10px] pr-[3px] pb-[3px] pl-[10px]">
            <div className="flex min-h-0 flex-1 gap-[13px]">
              <div className="flex w-[375px] shrink-0 flex-col gap-[13px]">
                <Panel focused className="flex-1 overflow-hidden">
                  <Tabs tabs={[{ label: 'Sources', line: true }, { label: 'Netlist', active: true, closable: true }]} icons={['help', 'minimize', 'maximize', 'float']} />
                  <div className={toolbarRow}>
                    <ToolButton icon="collapse" />
                    <ToolButton icon="schematic" />
                    <div className="ml-auto"><ToolButton icon="gear" line={false} /></div>
                  </div>
                  <NetTree />
                </Panel>
                <Panel className="h-[305px] shrink-0">
                  <div className="flex h-[30px] shrink-0 items-center pl-[6px]">
                    <h2 className="pb-[2px] font-bold">Bus Net Properties</h2>
                    <WindowIcons icons={['help', 'minimize', 'maximize', 'float', 'close']} />
                  </div>
                  <div className={toolbarRow}>
                    <Icon name="bus" className="mr-[2px] ml-1" />cnt_200us_reg
                    <div className="ml-auto flex">
                      <ToolButton icon="left" />
                      <ToolButton icon="right" muted />
                      <ToolButton icon="gear" line={false} />
                    </div>
                  </div>
                  <dl className="grid flex-1 grid-cols-[99px_1fr] content-start gap-y-4 bg-white pt-[15px] pl-[14px]">
                    <dt>Name:</dt><dd>cnt_200us_reg</dd>
                    <dt>Number of nets:</dt><dd>14</dd>
                  </dl>
                  <BottomTabs active="General" other="Scalar Nets" />
                </Panel>
              </div>
              <Panel className="min-w-0 flex-1">
                <Tabs
                  tabs={[
                    { label: 'Schematic', active: true, closable: true },
                    { label: 'ila_0.v', closable: true, line: true },
                    { label: 'breath_led.v', closable: true, line: true },
                    { label: 'breath_led.xdc', closable: true, line: true },
                  ]}
                  icons={['help', 'maximize', 'float']}
                />
                <div className={toolbarRow}>
                  {SCHEMATIC_TOOLS.map(([icon, muted]) => <ToolButton key={icon} icon={icon} muted={muted} />)}
                  <div className="flex gap-5 pl-[14px] text-[#1450f5]">
                    <a href="#cells">92 Cells</a><a href="#ports">3 I/O Ports</a><a href="#nets">122 Nets</a>
                  </div>
                  <div className="ml-auto"><ToolButton icon="gear" line={false} /></div>
                </div>
                <SchematicCanvas />
              </Panel>
            </div>
            <Panel className="h-[286px] shrink-0">
              <Tabs
                tabs={[
                  { label: 'Tcl Console', line: true },
                  { label: 'Messages', line: true },
                  { label: 'Log', line: true },
                  { label: 'Reports', line: true },
                  { label: 'Design Runs', line: true },
                  { label: 'Debug', active: true, closable: true },
                ]}
                icons={['help', 'minimize', 'maximize', 'float']}
              />
              <div className={toolbarRow}>
                <ToolButton icon="search" />
                <ToolButton icon="collapse" />
                <ToolButton icon="expand" />
                <ToolButton icon="bug" />
                <ToolButton icon="plus" menu />
                <ToolButton icon="tag" muted />
                <div className="ml-auto"><ToolButton icon="gear" line={false} /></div>
              </div>
              <DebugTable />
              <BottomTabs active="Debug Cores" other="Debug Nets" />
            </Panel>
          </div>
        </main>
      </div>
      <footer className="h-[22px] shrink-0" />
      <PenToolbox />
      <div className="pointer-events-none absolute right-[3px] bottom-[12px] font-['Liberation_Sans','Noto_Sans_CJK_SC',sans-serif] text-[49px]/[60px] font-light whitespace-nowrap text-[#8c8c8c]/55">
        CSDN @不想写代码的我
      </div>
    </div>
  );
}
